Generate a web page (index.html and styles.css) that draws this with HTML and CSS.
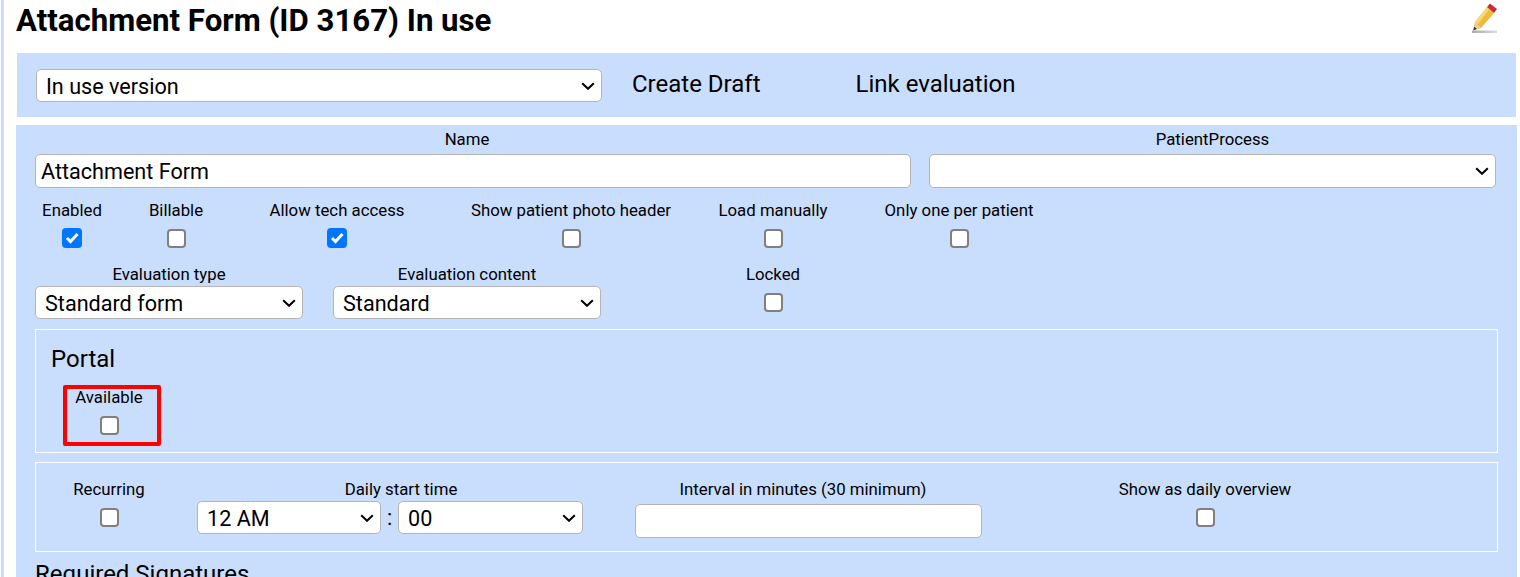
FILE: index.html
```html
<!DOCTYPE html>
<html lang="en">
<head>
<meta charset="utf-8">
<title>Attachment Form</title>
<link rel="stylesheet" href="styles.css">
</head>
<body>
<div class="page">
  <header class="title-row">
    <h1 class="title">Attachment Form (ID 3167) In use</h1>
    <svg class="pencil" width="30" height="34" viewBox="0 0 30 34" aria-hidden="true">
      <defs><linearGradient id="sh" x1="0" x2="1" y1="0" y2="0"><stop offset="0" stop-color="#aaa"/><stop offset="1" stop-color="#ddd"/></linearGradient></defs>
      <rect x="3" y="29.500" width="25" height="2.500" fill="url(#sh)"/>
      <polygon points="6,21 18,6 25,12 12,27 4.500,29" fill="#f0b93a"/>
      <polygon points="6,21 18,6 20.500,8 8.500,23.500" fill="#f8d878"/>
      <polygon points="6,21 12,27 4.500,29.500" fill="#e8cfa0"/>
      <polygon points="5.200,25.500 7.800,28 4.300,29.500" fill="#333"/>
      <polygon points="18,6 21,2.500 28,8 25,12" fill="#c42e3a"/>
    </svg>
  </header>

  <section class="panel version-bar">
    <select class="ctl version-select"><option>In use version</option></select>
    <span class="action create">Create Draft</span>
    <span class="action link">Link evaluation</span>
  </section>

  <section class="panel form">
    <div class="row name-row">
      <label class="field name"><span>Name</span><input class="ctl" type="text" value="Attachment Form"></label>
      <label class="field"><span>PatientProcess</span><select class="ctl"><option></option></select></label>
    </div>

    <div class="checks">
      <label class="check"><span>Enabled</span><input type="checkbox" checked></label>
      <label class="check"><span>Billable</span><input type="checkbox"></label>
      <label class="check"><span>Allow tech access</span><input type="checkbox" checked></label>
      <label class="check"><span>Show patient photo header</span><input type="checkbox"></label>
      <label class="check"><span>Load manually</span><input type="checkbox"></label>
      <label class="check"><span>Only one per patient</span><input type="checkbox"></label>
    </div>

    <div class="type-row">
      <label class="field"><span>Evaluation type</span><select class="ctl"><option>Standard form</option></select></label>
      <label class="field"><span>Evaluation content</span><select class="ctl"><option>Standard</option></select></label>
      <label class="check locked"><span>Locked</span><input type="checkbox"></label>
    </div>

    <div class="box portal">
      <h2 class="heading">Portal</h2>
      <label class="check available"><span>Available</span><input type="checkbox"></label>
    </div>

    <div class="box schedule">
      <label class="check recurring"><span>Recurring</span><input type="checkbox"></label>
      <div class="field start">
        <span>Daily start time</span>
        <div class="time">
          <select class="ctl hour"><option>12 AM</option></select>
          <span class="colon">:</span>
          <select class="ctl minute"><option>00</option></select>
        </div>
      </div>
      <label class="field interval"><span>Interval in minutes (30 minimum)</span><input class="ctl" type="text"></label>
      <label class="check overview"><span>Show as daily overview</span><input type="checkbox"></label>
    </div>

    <h2 class="heading signatures">Required Signatures</h2>
  </section>
</div>
</body>
</html>
```

FILE: styles.css
```css
* { box-sizing: border-box; }
html, body { height: 100%; }
body {
  margin: 0;
  overflow: hidden;
  background: #fff;
  color: #000;
  font-family: Roboto, "Liberation Sans", sans-serif;
  font-size: 16.8px;
}
.page {
  height: 577px;
  margin-left: 1px;
  padding: 0 4px 0 13px;
  border-left: 3px solid #c9ddfc;
  overflow: hidden;
}
.title-row {
  height: 53px;
  display: flex;
  justify-content: space-between;
  align-items: flex-start;
}
.title {
  margin: 3px 0 0 -1px;
  font-size: 31.2px;
  line-height: 36px;
  font-weight: 700;
}
.pencil { margin: 1px 17px 0 0; }
.panel { background: #c9ddfc; }
.version-bar {
  height: 64px;
  display: flex;
  align-items: flex-start;
  padding: 16px 0 0 19px;
}
.ctl {
  display: block;
  height: 34px;
  width: 100%;
  font-family: inherit;
  font-size: 21.6px;
  color: #000;
  background-color: #fff;
  border: 1px solid #b5b5b5;
  border-radius: 5px;
  padding: 0 5px;
}
select.ctl {
  appearance: none;
  padding-left: 9px;
  background-image: url("data:image/svg+xml,%3Csvg xmlns='http://www.w3.org/2000/svg' width='14' height='8' viewBox='0 0 14 8'%3E%3Cpath d='M1.200 1.200L7 6.800L12.800 1.200' fill='none' stroke='%23000' stroke-width='2'/%3E%3C/svg%3E");
  background-repeat: no-repeat;
  background-position: right 6px center;
}
.version-select { width: 566px; flex: none; height: 33px; padding-top: 1px; }
.action { font-size: 24px; line-height: 30px; }
.create { margin-left: 30px; }
.link { margin-left: 95px; }
.form {
  margin: 8px -1px 0 -1px;
  height: 460px;
  padding: 3px 20px 0 19px;
}
.field { display: flex; flex-direction: column; text-align: center; }
.field > span { line-height: 23px; }
.name > span { padding-right: 12px; }
.name-row {
  display: grid;
  grid-template-columns: 876px 567px;
  column-gap: 18px;
}
.name-row .field > span { line-height: 22px; padding-bottom: 4px; }
.check { display: flex; flex-direction: column; align-items: center; }
.check > span { line-height: 23px; white-space: nowrap; }
.check input {
  appearance: none;
  width: 19px;
  height: 19px;
  margin: 7px 0 0;
  background: #fff;
  border: 2px solid #808080;
  border-radius: 4px;
}
.check input:checked {
  width: 20px;
  height: 20px;
  margin-top: 6px;
  border: 0;
  background: #0075ff url("data:image/svg+xml,%3Csvg xmlns='http://www.w3.org/2000/svg' width='20' height='20' viewBox='0 0 20 20'%3E%3Cpath d='M5 10L8.500 13.500L15.500 6' fill='none' stroke='%23fff' stroke-width='3'/%3E%3C/svg%3E") center no-repeat;
}
.checks {
  display: grid;
  grid-template-columns: 74px 134px 188px 280px 124px 248px;
  margin-top: 11px;
}
.type-row {
  display: grid;
  grid-template-columns: 268px 268px 344px;
  column-gap: 30px;
  margin-top: 14px;
}
.type-row .ctl { height: 33px; padding-top: 1px; }
.type-row .field > span { line-height: 24px; }
.locked { width: 54px; margin-left: 115px; }
.locked > span { line-height: 24px; }
.box {
  border: 1px solid #fff;
  width: 1463px;
}
.portal {
  height: 124px;
  margin-top: 10px;
  padding: 14px 0 0 15px;
}
.heading { margin: 0; font-size: 24px; font-weight: 400; line-height: 30px; }
.available {
  width: 98px;
  height: 61px;
  margin: 11px 0 0 12px;
  border: 4px solid #f00;
  border-radius: 2px;
  padding-right: 6px;
}
.available > span { line-height: 16px; }
.available input { margin-top: 11px; }
.schedule {
  height: 90px;
  margin-top: 9px;
  display: flex;
  align-items: flex-start;
  padding-top: 15px;
}
.recurring { width: 146px; margin-right: 15px; }
.recurring input { margin-top: 7px; }
.start { width: 386px; }
.start > span { padding-left: 22px; }
.time { display: flex; align-items: center; }
.hour { width: 184px; flex: none; height: 33px; padding-top: 1px; }
.minute { width: 185px; flex: none; height: 33px; padding-top: 1px; }
.colon { width: 17px; text-align: center; font-size: 21.6px; }
.interval { width: 347px; margin-left: 52px; }
.interval > span { padding-right: 11px; }
.interval .ctl { margin-top: 3px; }
.overview { width: 200px; margin-left: 123px; }
.overview input { margin-top: 7px; }
.signatures { margin: 7px 0 0 0; }
```
